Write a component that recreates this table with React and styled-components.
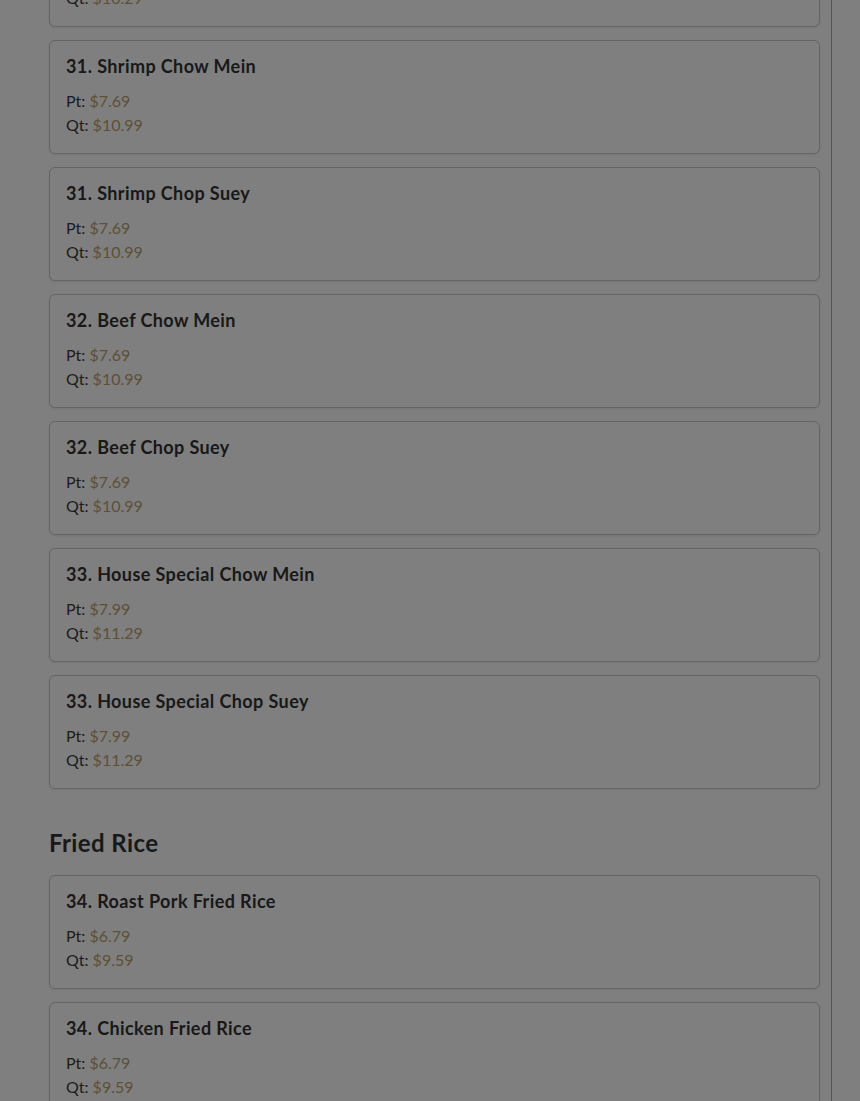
import React from "react";
import styled, { createGlobalStyle } from "styled-components";

const Global = createGlobalStyle`
  html, body { margin: 0; padding: 0; background: #ffffff; overflow: hidden; }
  body { font-family: "Lato", "Noto Sans", sans-serif; }
`;

const Page = styled.div`
  display: flex;
  min-height: 1101px;
`;

const Column = styled.main`
  width: 782px;
  padding-left: 49px;
  border-right: 1px solid #a8a8a8;
  box-sizing: content-box;
`;

const List = styled.div`
  width: 771px;
  margin-top: -87px;
`;

const SectionTitle = styled.h2`
  margin: 39px 0 18px;
  font-size: 24px;
  line-height: 29px;
  font-weight: 700;
  letter-spacing: 0.4px;
  color: #333333;
`;

const Card = styled.div`
  box-sizing: border-box;
  height: 114px;
  margin-bottom: 13px;
  padding: 14px 16px 16px;
  border: 1px solid #c8c8c8;
  border-radius: 6px;
  background: #ffffff;
  box-shadow: 0 1px 3px rgba(0, 0, 0, 0.08);
`;

const ItemName = styled.h3`
  margin: 0 0 12px;
  font-size: 18px;
  line-height: 22px;
  font-weight: 700;
  letter-spacing: 0.4px;
  color: #333333;
`;

const PriceLine = styled.div`
  font-size: 16px;
  line-height: 24px;
  color: #3a3a3a;
`;

const Price = styled.span`
  color: #bc9f6e;
`;

const Overlay = styled.div`
  position: fixed;
  inset: 0;
  background: rgba(0, 0, 0, 0.5);
`;

const sections = [
  {
    items: [
      { name: "30. Chicken Chop Suey", pt: "$7.49", qt: "$10.29" },
      { name: "31. Shrimp Chow Mein", pt: "$7.69", qt: "$10.99" },
      { name: "31. Shrimp Chop Suey", pt: "$7.69", qt: "$10.99" },
      { name: "32. Beef Chow Mein", pt: "$7.69", qt: "$10.99" },
      { name: "32. Beef Chop Suey", pt: "$7.69", qt: "$10.99" },
      { name: "33. House Special Chow Mein", pt: "$7.99", qt: "$11.29" },
      { name: "33. House Special Chop Suey", pt: "$7.99", qt: "$11.29" },
    ],
  },
  {
    title: "Fried Rice",
    items: [
      { name: "34. Roast Pork Fried Rice", pt: "$6.79", qt: "$9.59" },
      { name: "34. Chicken Fried Rice", pt: "$6.79", qt: "$9.59" },
      { name: "35. Shrimp Fried Rice", pt: "$6.99", qt: "$9.99" },
    ],
  },
];

export default function App() {
  return (
    <>
      <Global />
      <Page>
        <Column>
          <List>
            {sections.map((s, i) => (
              <React.Fragment key={i}>
                {s.title && <SectionTitle>{s.title}</SectionTitle>}
                {s.items.map((it) => (
                  <Card key={it.name}>
                    <ItemName>{it.name}</ItemName>
                    <PriceLine>
                      Pt: <Price>{it.pt}</Price>
                    </PriceLine>
                    <PriceLine>
                      Qt: <Price>{it.qt}</Price>
                    </PriceLine>
                  </Card>
                ))}
              </React.Fragment>
            ))}
          </List>
        </Column>
      </Page>
      <Overlay />
    </>
  );
}
